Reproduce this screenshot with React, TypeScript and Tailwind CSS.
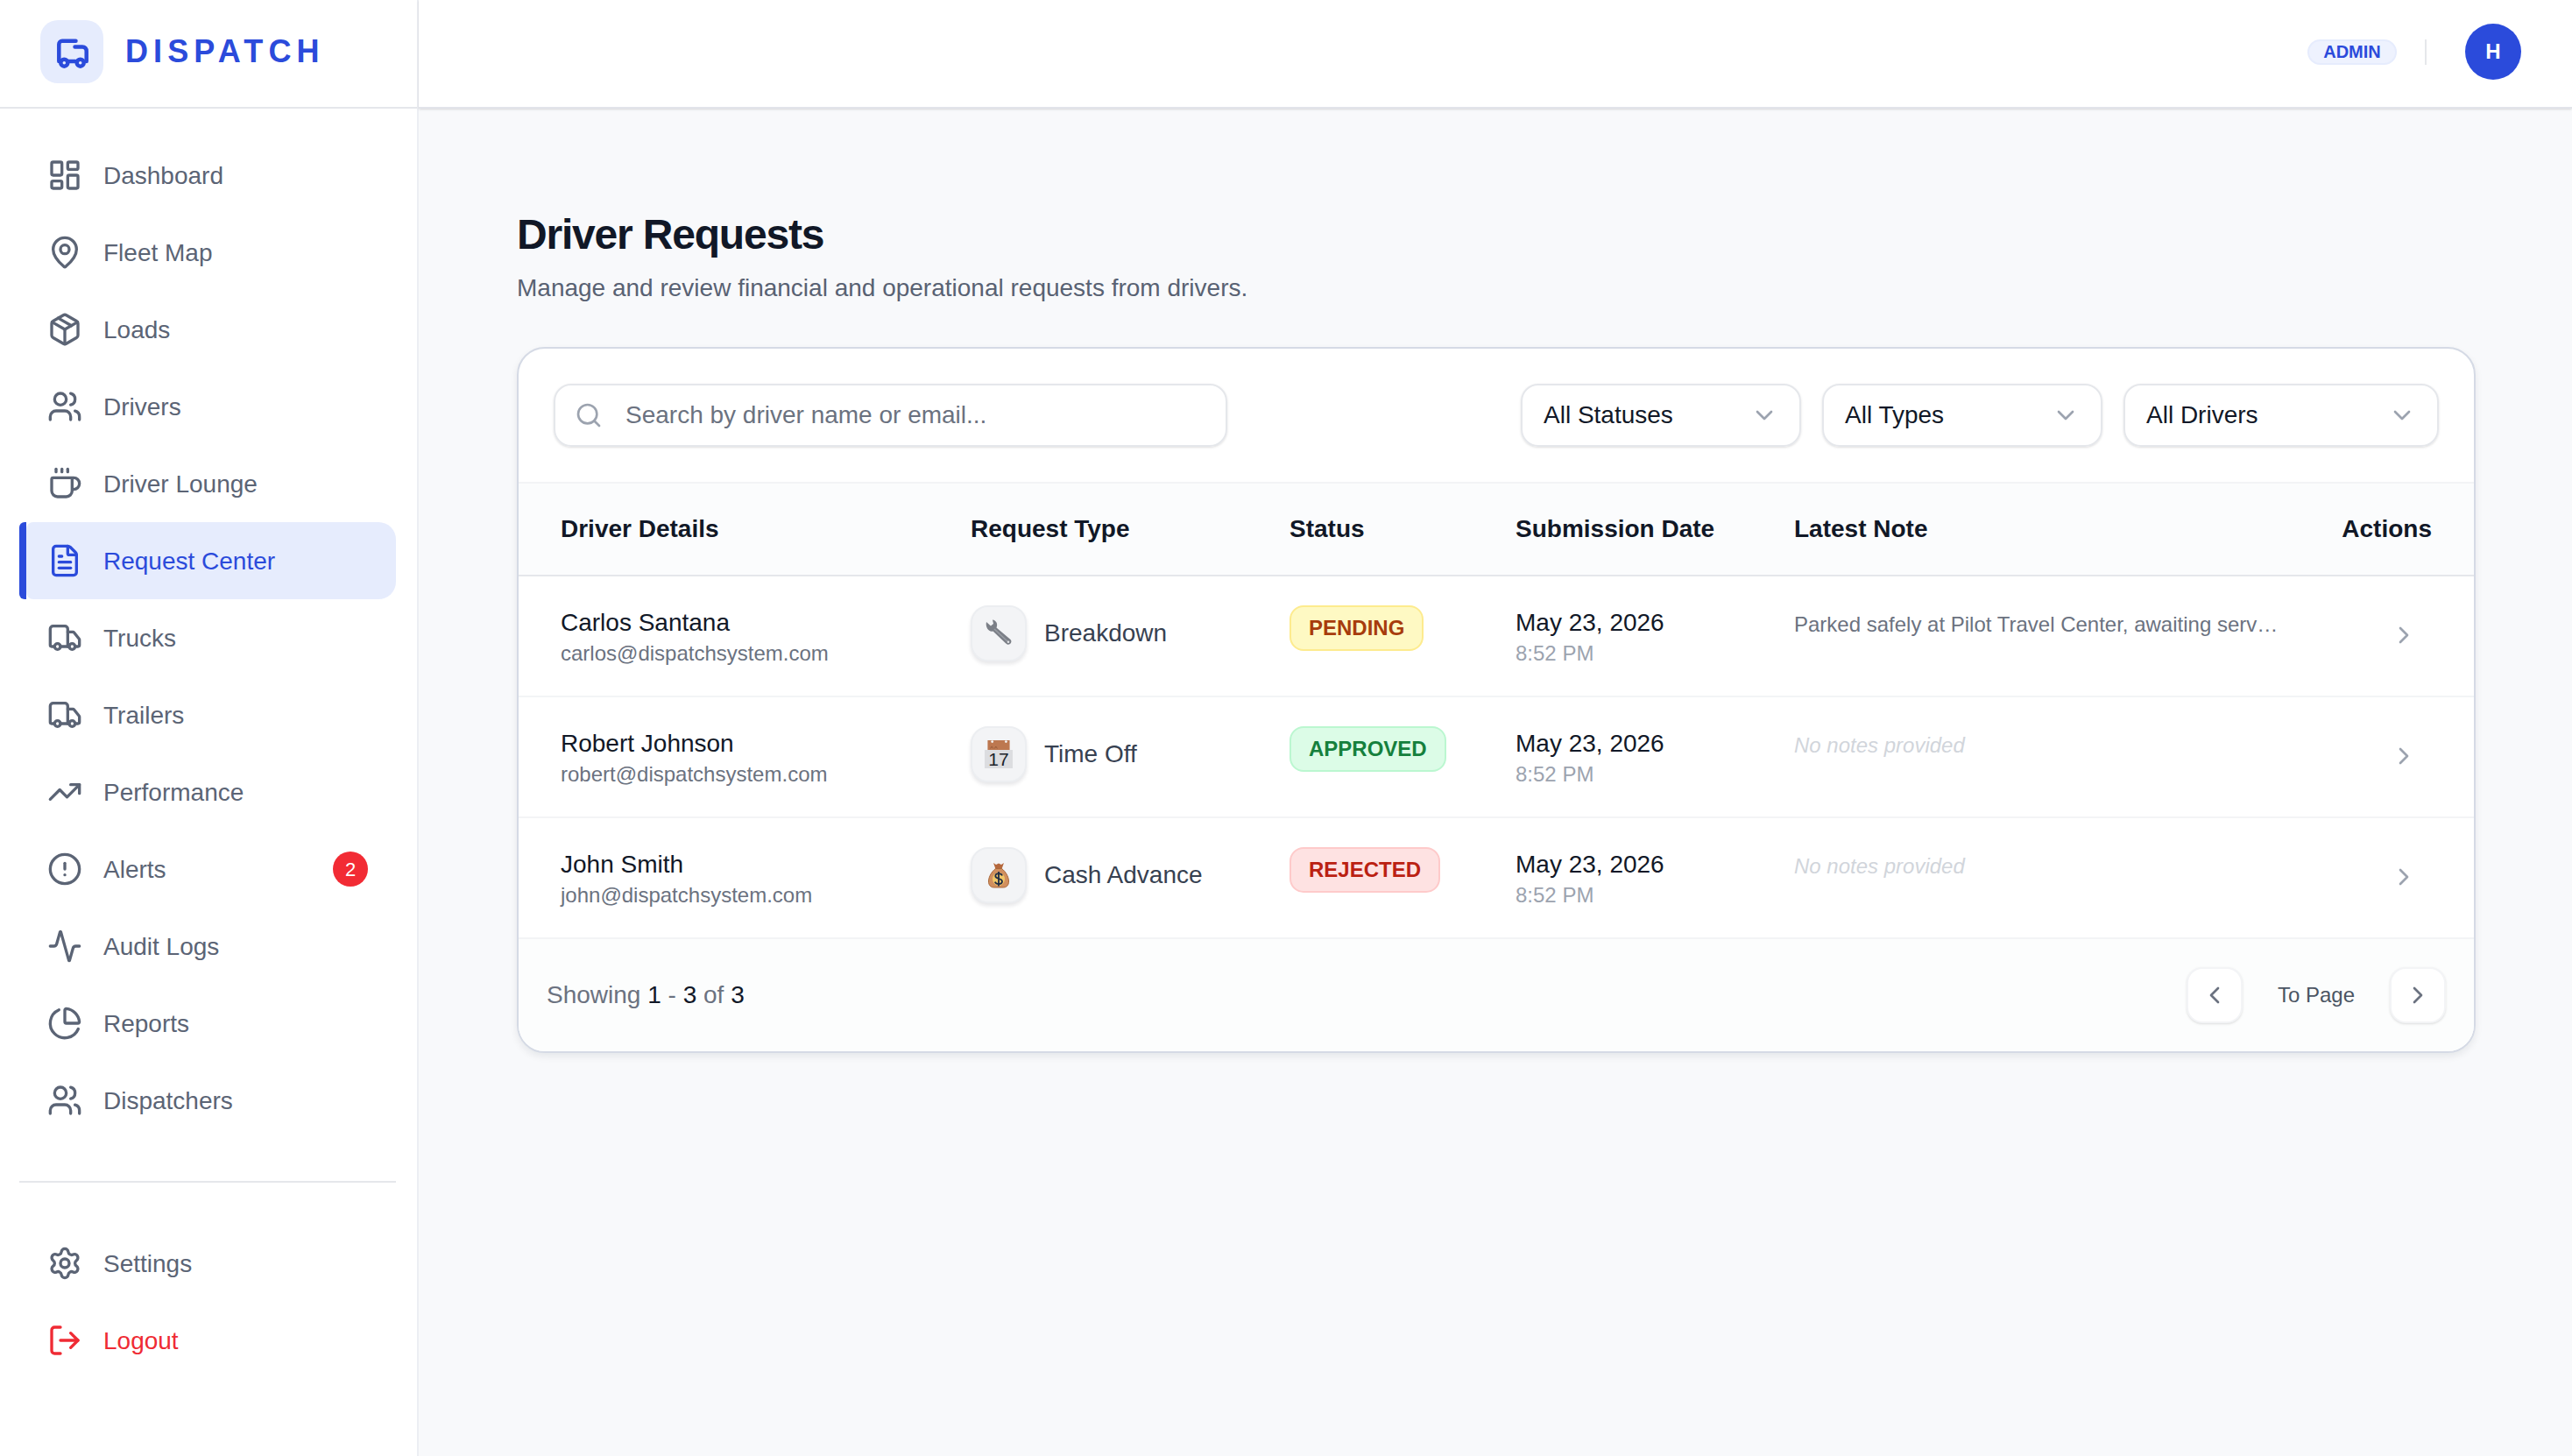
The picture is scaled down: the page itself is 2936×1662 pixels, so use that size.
import {
  Activity,
  ChartPie,
  ChevronDown,
  ChevronLeft,
  ChevronRight,
  CircleAlert,
  Coffee,
  FileText,
  LayoutDashboard,
  LogOut,
  MapPin,
  Package,
  Search,
  Settings,
  TrendingUp,
  Truck,
  Users,
} from "lucide-react";

const navItems = [
  { title: "Dashboard", icon: LayoutDashboard },
  { title: "Fleet Map", icon: MapPin },
  { title: "Loads", icon: Package },
  { title: "Drivers", icon: Users },
  { title: "Driver Lounge", icon: Coffee },
  { title: "Request Center", icon: FileText, active: true },
  { title: "Trucks", icon: Truck },
  { title: "Trailers", icon: Truck },
  { title: "Performance", icon: TrendingUp },
  { title: "Alerts", icon: CircleAlert, badge: 2 },
  { title: "Audit Logs", icon: Activity },
  { title: "Reports", icon: ChartPie },
  { title: "Dispatchers", icon: Users },
];

function LogoTruck() {
  return (
    <svg viewBox="0 0 40 40" className="w-10 h-10" fill="none" stroke="#2b4bdb" strokeWidth="4.500" strokeLinecap="round" strokeLinejoin="round">
      <path d="M24.500 7.700H9a3.700 3.700 0 0 0-3.700 3.700V31" />
      <path d="M23.500 14.500H32c3 0 4.700 2 4.700 5V31" />
      <path d="M16 31h8" />
      <circle cx="11.300" cy="32.700" r="4" />
      <circle cx="29.700" cy="32.700" r="4" />
    </svg>
  );
}

function WrenchEmoji() {
  return (
    <svg viewBox="0 0 32 32" className="w-8 h-8">
      <path d="M2 3L7 7.500l3-2.500L9 .5c4 .5 6.500 4.500 4.500 9L29.500 23c1.600 1.600 1 3.800-.5 5-1.800 1.400-3.600.8-5-.7L9.500 13.500C5 15 .5 9 2 3z" fill="#7b7f87" />
      <path d="M11 11l15 14" stroke="#9a9ea5" strokeWidth="1.500" />
      <circle cx="27" cy="25.700" r="1.300" fill="#e3e5e8" />
    </svg>
  );
}

function CalendarEmoji() {
  return (
    <div className="flex flex-col w-8 h-8">
      <svg viewBox="0 0 32 14" className="w-8 h-[14px]">
        <rect width="32" height="14" fill="#bd7850" />
        <circle cx="6.700" cy="2" r="1.800" fill="#f5f5f5" />
        <circle cx="26.700" cy="2" r="1.800" fill="#f5f5f5" />
        <path d="M4 12l2-3 2 3M10 12l2-3 2 3" fill="none" stroke="#8f5636" strokeWidth="1" />
      </svg>
      <div className="flex-1 bg-[#dcdde0] flex items-center justify-center text-[21px] leading-none text-[#20242c]">17</div>
    </div>
  );
}

function MoneyBagEmoji() {
  return (
    <svg viewBox="0 0 24 30" className="w-6 h-[30px]">
      <path d="M6 1l3 2 3-1.500L15 3l3-2-2.500 7h-7z" fill="#b5683c" />
      <path d="M8.500 7.500h7c4 3 8 9 8 14.500 0 5-3 7-6 7H6.500c-3 0-6-2-6-7 0-5.500 4-11.500 8-14.500z" fill="#d18f5e" stroke="#a9683a" strokeWidth="1" />
      <ellipse cx="12" cy="19.500" rx="7" ry="7.500" fill="#f0c667" />
      <path d="M16 15.500c-.6-1.600-2.200-2.300-4-2.300-2 0-3.700 1.100-3.700 2.900 0 3.800 7.700 2 7.700 6 0 1.900-1.900 3-4 3-1.900 0-3.500-.9-4.200-2.500M12 11v16.500" fill="none" stroke="#1e2a44" strokeWidth="1.800" />
    </svg>
  );
}

const requests = [
  {
    name: "Carlos Santana",
    email: "carlos@dispatchsystem.com",
    type: "Breakdown",
    icon: <WrenchEmoji />,
    status: "PENDING",
    statusClass: "bg-[#fef9c3] border-[#fdeb8e] text-[#a73c0c]",
    note: "Parked safely at Pilot Travel Center, awaiting serv…",
  },
  {
    name: "Robert Johnson",
    email: "robert@dispatchsystem.com",
    type: "Time Off",
    icon: <CalendarEmoji />,
    status: "APPROVED",
    statusClass: "bg-[#dcfce7] border-[#bbf7d0] text-[#15803d]",
    note: "",
  },
  {
    name: "John Smith",
    email: "john@dispatchsystem.com",
    type: "Cash Advance",
    icon: <MoneyBagEmoji />,
    status: "REJECTED",
    statusClass: "bg-[#fee2e2] border-[#fecaca] text-[#bb2112]",
    note: "",
  },
];

const columns = "grid grid-cols-[468px_364px_258px_318px_1fr]";

function Sidebar() {
  return (
    <aside className="w-[478px] shrink-0 h-[1662px] bg-white border-r-2 border-[#eceef3] flex flex-col">
      {/* Logo */}
      <div className="h-[124px] border-b-2 border-[#e5e7eb] flex items-center pl-[46px] pb-1 gap-[25px] shrink-0">
        <div className="w-[72px] h-[72px] rounded-[20px] bg-[#e6ecfd] flex items-center justify-center">
          <LogoTruck />
        </div>
        <span className="text-[36px] font-bold tracking-[0.17em] text-[#2b4bdb] leading-none">DISPATCH</span>
      </div>

      <nav className="pt-8 flex flex-col">
        {navItems.map((item) => (
          <div
            key={item.title}
            className={`h-[88px] ml-[22px] mr-6 flex text-[28px] ${
              item.active ? "border-l-8 border-[#2b4bdb] rounded-l-[6px] text-[#2b4bdb]" : "text-[#5b6475]"
            }`}
          >
            <div className={`flex-1 flex items-center gap-6 ${item.active ? "bg-[#e6ecfd] rounded-l-[8px] rounded-r-[20px] pl-6" : "pl-8"}`}>
              <item.icon className="w-10 h-10 shrink-0" strokeWidth={2} />
              <span className="mt-[2px]">{item.title}</span>
              {item.badge && (
                <span className="ml-auto mr-8 w-10 h-10 rounded-full bg-[#f22b34] text-white text-[22px] flex items-center justify-center">
                  {item.badge}
                </span>
              )}
            </div>
          </div>
        ))}
      </nav>

      <div className="mt-12 ml-[22px] mr-6 border-t-2 border-[#e5e7eb] pt-12 flex flex-col">
        <div className="h-[88px] pl-8 flex items-center gap-6 text-[28px] text-[#5b6475]">
          <Settings className="w-10 h-10" />
          <span className="mt-[2px]">Settings</span>
        </div>
        <div className="h-[88px] pl-8 flex items-center gap-6 text-[28px] text-[#ef2b34]">
          <LogOut className="w-10 h-10" />
          <span className="mt-[2px]">Logout</span>
        </div>
      </div>
    </aside>
  );
}

export default function App() {
  return (
    <div className="flex w-[2936px] h-[1662px] overflow-hidden bg-[#f8f9fb] text-[#111827] font-['Liberation_Sans',Arial,sans-serif]">
      <Sidebar />

      <div className="flex-1 flex flex-col min-w-0">
        <header className="h-[124px] shrink-0 bg-white border-b-2 border-[#e2e4ea] shadow-sm flex items-center justify-end pr-[58px] pb-1">
          <span className="h-[29px] w-[102px] rounded-full bg-[#eef2fe] border-2 border-[#e6ecfd] text-[20px] font-bold text-[#2b4bdb] flex items-center justify-center">ADMIN</span>
          <div className="w-[2px] h-[29px] bg-[#e5e7eb] ml-8 mr-[44px]" />
          <div className="w-16 h-16 rounded-full bg-[#2b4bdb] text-white text-[24px] font-bold flex items-center justify-center">H</div>
        </header>

        <main className="pl-[112px] pr-[110px] pt-[119px]">
          <h1 className="text-[48px] leading-[50px] font-bold tracking-tight text-[#111827]">Driver Requests</h1>
          <p className="mt-[18px] text-[28px] leading-[36px] text-[#596273]">Manage and review financial and operational requests from drivers.</p>

          <div className="mt-[49px] bg-white rounded-[32px] border-2 border-[#d5dae5] shadow-[0_4px_8px_rgba(17,24,39,0.08)] overflow-hidden">
            {/* Filters */}
            <div className="h-[152px] p-10 flex items-center">
              <div className="w-[769px] h-[72px] rounded-[20px] border-2 border-[#e5e7eb] shadow-sm flex items-center pl-[22px] gap-[26px]">
                <Search className="w-8 h-8 text-[#9ca3af] shrink-0" />
                <input
                  className="flex-1 min-w-0 bg-transparent outline-none text-[28px] placeholder:text-[#6b7280]"
                  placeholder="Search by driver name or email..."
                />
              </div>
              <div className="ml-auto flex gap-6">
                {[
                  { label: "All Statuses", width: "w-[320px]" },
                  { label: "All Types", width: "w-[320px]" },
                  { label: "All Drivers", width: "w-[360px]" },
                ].map((f) => (
                  <div key={f.label} className={`${f.width} h-[72px] rounded-[20px] border-2 border-[#e5e7eb] shadow-sm flex items-center justify-between pl-6 pr-6 text-[28px]`}>
                    <span>{f.label}</span>
                    <ChevronDown className="w-8 h-8 text-[#9ca3af]" />
                  </div>
                ))}
              </div>
            </div>

            {/* Table */}
            <div className={`${columns} h-[108px] items-center bg-[#fbfcfd] border-y-2 border-t-[#f3f4f6] border-b-[#e5e7eb] text-[28px] font-bold`}>
              <div className="pl-12">Driver Details</div>
              <div className="pl-12">Request Type</div>
              <div className="pl-12">Status</div>
              <div className="pl-12">Submission Date</div>
              <div className="pl-12 flex justify-between pr-12">
                <span>Latest Note</span>
                <span>Actions</span>
              </div>
            </div>

            {requests.map((r) => (
              <div key={r.email} className={`${columns} h-[138px] border-b-2 border-[#f3f4f6] pt-[33px]`}>
                <div className="pl-12 pt-[1px]">
                  <div className="text-[28px] leading-[38px]">{r.name}</div>
                  <div className="text-[24px] leading-8 text-[#6b7280]">{r.email}</div>
                </div>
                <div className="pl-12 flex items-start gap-5">
                  <div className="w-16 h-16 rounded-[20px] bg-[#f3f4f6] border-2 border-[#eceef1] shadow-[0_3px_4px_rgba(17,24,39,0.10)] flex items-center justify-center">
                    {r.icon}
                  </div>
                  <span className="text-[28px] leading-16 text-[#374151]">{r.type}</span>
                </div>
                <div className="pl-12">
                  <span className={`inline-flex h-[52px] items-center rounded-[16px] border-2 px-5 text-[24px] font-bold ${r.statusClass}`}>{r.status}</span>
                </div>
                <div className="pl-12 pt-[1px]">
                  <div className="text-[28px] leading-[38px]">May 23, 2026</div>
                  <div className="text-[24px] leading-8 text-[#9ca3af]">8:52 PM</div>
                </div>
                <div className="pl-12 flex justify-between">
                  {r.note ? (
                    <span className="text-[24px] leading-[44px] text-[#6b7280] whitespace-nowrap">{r.note}</span>
                  ) : (
                    <span className="text-[24px] leading-[44px] italic text-[#d1d5db]">No notes provided</span>
                  )}
                  <ChevronRight className="w-8 h-8 mt-[18px] mr-16 text-[#9ca3af]" />
                </div>
              </div>
            ))}

            <div className="h-[128px] bg-[#fcfdfd] flex items-center pl-8 pr-8 text-[28px] text-[#6b7280]">
              <span>
                Showing <span className="text-[#111827]">1</span> - <span className="text-[#111827]">3</span> of <span className="text-[#111827]">3</span>
              </span>
              <div className="ml-auto flex items-center gap-10">
                <div className="w-16 h-16 rounded-[18px] bg-white border-2 border-[#f3f4f6] shadow-sm flex items-center justify-center">
                  <ChevronLeft className="w-8 h-8 text-[#6b7280]" />
                </div>
                <span className="text-[24px] text-[#4b5563]">To Page</span>
                <div className="w-16 h-16 rounded-[18px] bg-white border-2 border-[#f3f4f6] shadow-sm flex items-center justify-center">
                  <ChevronRight className="w-8 h-8 text-[#6b7280]" />
                </div>
              </div>
            </div>
          </div>
        </main>
      </div>
    </div>
  );
}
